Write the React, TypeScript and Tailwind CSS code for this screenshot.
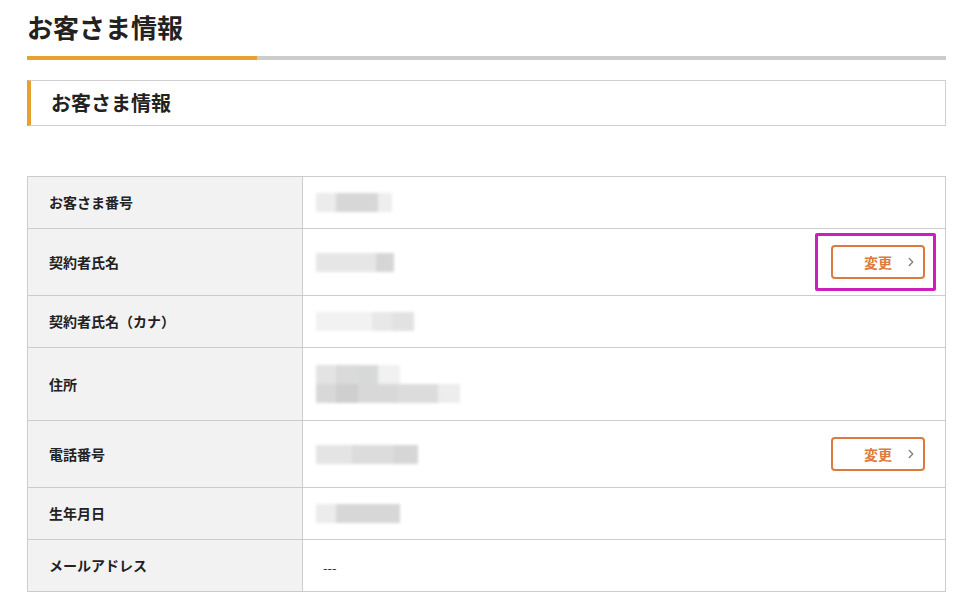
import { ChevronRight } from "lucide-react";

type Seg = { w: number; c: string };

// ぼかしたダミー値
function Blurred({ rows }: { rows: Seg[][] }) {
  return (
    <div className="flex flex-col blur-[1.5px]">
      {rows.map((segs, i) => (
        <div key={i} className="flex h-[19px]">
          {segs.map((s, j) => (
            <div key={j} style={{ width: s.w, backgroundColor: s.c }} />
          ))}
        </div>
      ))}
    </div>
  );
}

function EditButton({ highlight }: { highlight?: boolean }) {
  return (
    <div className="relative">
      {highlight && (
        <div className="absolute -left-[16px] -right-[11px] -top-[12px] -bottom-[12px] border-[3px] border-[#cc1fbd] rounded-[2px]" />
      )}
      <button className="relative flex items-center justify-center w-[94px] h-[34px] border-2 border-[#dc7a3e] rounded-[4px] bg-white text-[#dc7a3e] text-[14px] font-bold">
        <span>変更</span>
        <ChevronRight className="absolute right-[5px] w-[14px] h-[14px]" strokeWidth={2.2} color="#8a7a70" />
      </button>
    </div>
  );
}

type Row = { label: string; h: string; value: React.ReactNode; button?: "normal" | "highlight" };

const rows: Row[] = [
  {
    label: "お客さま番号",
    h: "h-[51px]",
    value: <Blurred rows={[[{ w: 20, c: "#ececec" }, { w: 42, c: "#d7d7d7" }, { w: 14, c: "#eeeeee" }]]} />,
  },
  {
    label: "契約者氏名",
    h: "h-[67px]",
    value: <Blurred rows={[[{ w: 60, c: "#e6e6e6" }, { w: 18, c: "#d6d6d6" }]]} />,
    button: "highlight",
  },
  {
    label: "契約者氏名（カナ）",
    h: "h-[52px]",
    value: <Blurred rows={[[{ w: 56, c: "#f2f2f2" }, { w: 20, c: "#e8e8e8" }, { w: 22, c: "#e2e2e2" }]]} />,
  },
  {
    label: "住所",
    h: "h-[73px]",
    value: (
      <Blurred
        rows={[
          [{ w: 20, c: "#e3e3e3" }, { w: 22, c: "#dadada" }, { w: 20, c: "#d7d8d8" }, { w: 22, c: "#f1f1f1" }],
          [{ w: 20, c: "#d8d8d8" }, { w: 22, c: "#cfcfcf" }, { w: 40, c: "#d8d8d8" }, { w: 40, c: "#dcdcdc" }, { w: 22, c: "#ededed" }],
        ]}
      />
    ),
  },
  {
    label: "電話番号",
    h: "h-[67px]",
    value: <Blurred rows={[[{ w: 36, c: "#e4e4e4" }, { w: 42, c: "#dcdcdc" }, { w: 24, c: "#d6d6d6" }]]} />,
    button: "normal",
  },
  {
    label: "生年月日",
    h: "h-[52px]",
    value: <Blurred rows={[[{ w: 20, c: "#ececec" }, { w: 64, c: "#d7d7d7" }]]} />,
  },
  {
    label: "メールアドレス",
    h: "h-[52px]",
    value: <span className="pl-[7px] text-[13px] text-[#333]">---</span>,
  },
];

export default function App() {
  return (
    <div
      className="w-[977px] h-[612px] bg-white px-[27px] pt-[9px] overflow-hidden"
      style={{ fontFamily: '"Noto Sans CJK JP", "Noto Sans", sans-serif' }}
    >
      {/* ページタイトル */}
      <h1 className="text-[26px] font-bold text-[#222] leading-[36px] w-[919px]">お客さま情報</h1>
      <div className="flex w-[919px] h-[4px] mt-[11px]">
        <div className="w-[230px] bg-[#e6a12e]" />
        <div className="flex-1 bg-[#cccccc]" />
      </div>

      {/* セクション見出し */}
      <div className="w-[919px] h-[46px] mt-[20px] flex items-center border border-[#d0d0d0] border-l-[4px] border-l-[#e6a12e] pl-[20px]">
        <h2 className="text-[20px] font-bold text-[#222]">お客さま情報</h2>
      </div>

      {/* 情報テーブル */}
      <div className="w-[919px] mt-[50px] border border-[#cccccc]">
        {rows.map((r, i) => (
          <div key={i} className={`flex ${r.h} ${i > 0 ? "border-t border-[#cccccc]" : ""}`}>
            <div className="w-[275px] shrink-0 bg-[#f2f2f2] border-r border-[#cccccc] flex items-center pl-[21px] text-[14px] font-bold text-[#222]">
              {r.label}
            </div>
            <div className="flex-1 flex items-center justify-between pl-[13px] pr-[20px]">
              <div>{r.value}</div>
              {r.button && <EditButton highlight={r.button === "highlight"} />}
            </div>
          </div>
        ))}
      </div>
    </div>
  );
}
